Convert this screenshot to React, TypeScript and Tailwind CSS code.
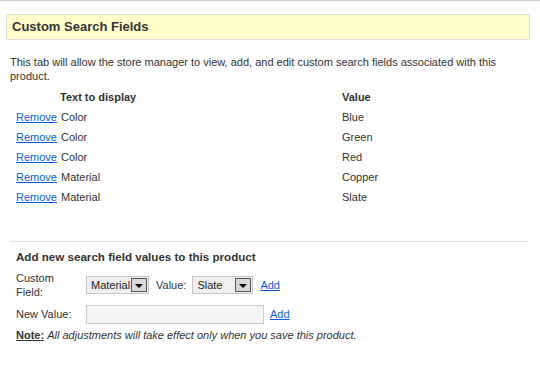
import React from 'react'

// ── Data ───────────────────────────────────────────────────────────────────

const FIELDS = [
  { name: 'Color', value: 'Blue' },
  { name: 'Color', value: 'Green' },
  { name: 'Color', value: 'Red' },
  { name: 'Material', value: 'Copper' },
  { name: 'Material', value: 'Slate' },
]

// ── Bits ───────────────────────────────────────────────────────────────────

function Select({ label, width }: { label: string; width: string }) {
  return (
    <div className={`flex h-[18px] items-center justify-between border border-[#c4c4c4] bg-[#f0f0f0] pl-[4px] pr-[1px] ${width}`}>
      <span className="text-[11px] leading-none text-[#222]">{label}</span>
      <span className="flex h-[14px] w-[16px] items-center justify-center border border-[#555] bg-[#d8d8d8]">
        <span className="mt-[1px] h-0 w-0 border-x-[4px] border-t-[4px] border-x-transparent border-t-black" />
      </span>
    </div>
  )
}

function Link({ children }: { children: React.ReactNode }) {
  return <a className="cursor-pointer text-[#0a5ee0] underline">{children}</a>
}

// ── Component ──────────────────────────────────────────────────────────────

export default function App() {
  return (
    <div className="h-[368px] w-[540px] overflow-hidden border-t border-[#cccccc] bg-white font-['Liberation_Sans',Arial,sans-serif] text-[11px] text-[#333]">
      {/* Header */}
      <div className="ml-[6px] mt-[13px] flex h-[26px] w-[524px] items-center border border-[#dddddd] bg-[#ffffcc] pl-[5px]">
        <h2 className="text-[13px] font-bold text-[#333]">Custom Search Fields</h2>
      </div>

      <p className="mt-[15px] px-[10px] leading-[14px]">
        This tab will allow the store manager to view, add, and edit custom search fields associated with this product.
      </p>

      {/* Existing fields */}
      <div className="mt-[4px] pl-[16px]">
        <div className="flex h-[20px] items-center font-bold">
          <span className="ml-[44px] w-[282px]">Text to display</span>
          <span>Value</span>
        </div>
        {FIELDS.map((f, i) => (
          <div key={i} className="flex h-[20px] items-center">
            <span className="w-[45px]"><Link>Remove</Link></span>
            <span className="w-[281px]">{f.name}</span>
            <span>{f.value}</span>
          </div>
        ))}
      </div>

      <div className="ml-[10px] mt-[34px] h-px w-[517px] bg-[#e2e2e2]" />

      {/* Add form */}
      <div className="px-[16px] pt-[8px]">
        <h3 className="text-[11.6px] font-bold leading-[14px]">Add new search field values to this product</h3>
        <div className="mt-[7px] flex items-center">
          <span className="w-[70px] leading-[14px]">Custom<br />Field:</span>
          <Select label="Material" width="w-[63px]" />
          <span className="ml-[7px] mr-[6px]">Value:</span>
          <Select label="Slate" width="w-[61px]" />
          <span className="ml-[7px]"><Link>Add</Link></span>
        </div>
        <div className="mt-[6px] flex items-center">
          <span className="w-[70px]">New Value:</span>
          <div className="h-[19px] w-[178px] border border-[#cccccc] bg-[#f5f5f5]" />
          <span className="ml-[6px]"><Link>Add</Link></span>
        </div>
        <p className="mt-[3px]">
          <span className="font-bold underline">Note:</span>{' '}
          <i>All adjustments will take effect only when you save this product.</i>
        </p>
      </div>
    </div>
  )
}
